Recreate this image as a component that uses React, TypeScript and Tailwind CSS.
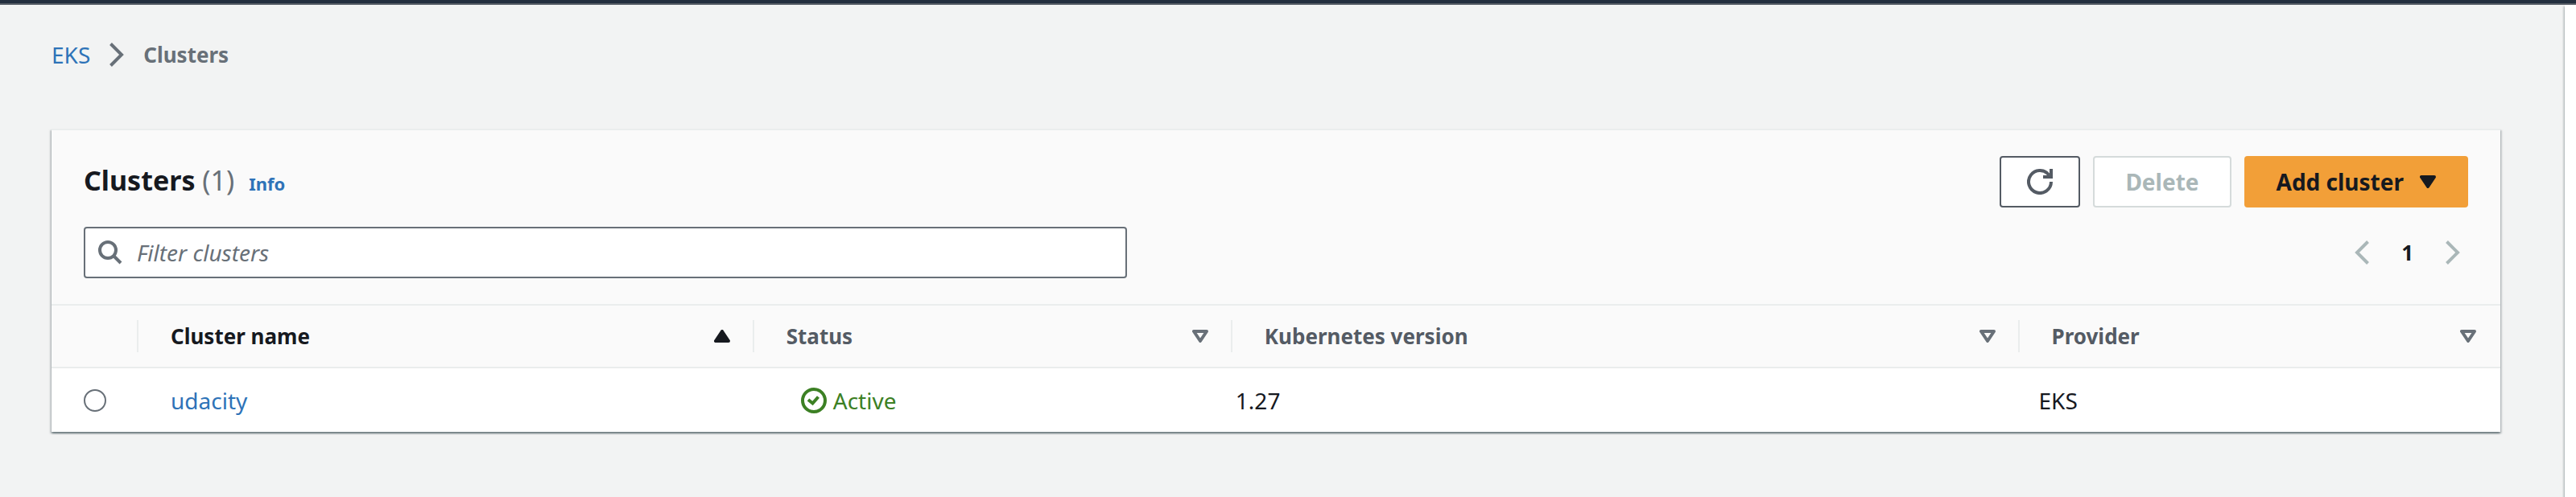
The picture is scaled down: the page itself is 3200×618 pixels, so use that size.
import React from "react";

function Caret({ kind }: { kind: "up" | "down" | "outline" }) {
  const color = kind === "outline" ? "#687078" : "#16191f";
  return (
    <svg
      width="20"
      height="16"
      viewBox="0 0 20 16"
      fill={kind === "outline" ? "none" : color}
      stroke={color}
      strokeWidth="4"
      strokeLinejoin="round"
      aria-hidden="true"
    >
      <path d={kind === "up" ? "M2 14h16L10 2z" : "M2 2h16L10 14z"} />
    </svg>
  );
}

function Chevron({ left = false, color }: { left?: boolean; color: string }) {
  return (
    <svg width="18" height="32" viewBox="0 0 18 32" fill="none" stroke={color} strokeWidth="4" aria-hidden="true">
      <path d={left ? "M16.500 2.500L3 16l13.500 13.500" : "M1.500 2.500L15 16 1.500 29.500"} />
    </svg>
  );
}

function HeaderCell({ label, sorted = false, last = false }: { label: string; sorted?: boolean; last?: boolean }) {
  return (
    <th scope="col" className="p-0 font-bold" aria-sort={sorted ? "ascending" : undefined}>
      <button
        type="button"
        className={`my-[18px] flex h-10 w-full items-center justify-between border-[#eaeded] pl-10 text-left ${
          last ? "pr-[30px]" : "border-r-2 pr-7"
        } ${sorted ? "text-[#16191f]" : "text-[#545b64]"}`}
      >
        {label}
        <Caret kind={sorted ? "up" : "outline"} />
      </button>
    </th>
  );
}

export default function App() {
  return (
    <div className="flex min-h-screen flex-col bg-white font-['Noto_Sans',sans-serif] text-[28px] leading-10 text-[#16191f]">
      <div className="h-1.5 shrink-0 border-b-2 border-[#545b64] bg-[#232f3e]" />
      <div className="flex grow">
        <main className="grow bg-[#f2f3f3] pt-[42px] pr-20 pl-16">
          <nav aria-label="Breadcrumbs" className="flex items-center gap-6 pb-[72px]">
            <a href="#eks" className="text-[#2e73b8]">EKS</a>
            <Chevron color="#687078" />
            <span className="text-[26px] font-bold text-[#687078]">Clusters</span>
          </nav>

          <section className="border-t-2 border-[#eaeded] bg-[#fafafa] shadow-[0_2px_2px_rgba(0,28,36,0.4),2px_2px_2px_rgba(0,28,36,0.15),-2px_2px_2px_rgba(0,28,36,0.15)]">
            <div className="flex items-start justify-between px-10 pt-8">
              <div className="flex items-baseline gap-[18px]">
                <h2 className="text-[34px] leading-[60px] font-bold">
                  Clusters <span className="font-normal text-[#687078]">(1)</span>
                </h2>
                <a href="#info" className="text-[22px] font-bold text-[#2e73b8]">Info</a>
              </div>
              <div className="flex gap-4 font-bold">
                <button type="button" aria-label="Refresh" className="flex h-16 w-[100px] items-center justify-center rounded-sm border-2 border-[#545b64] bg-white">
                  <svg width="32" height="32" viewBox="0 0 32 32" fill="none" stroke="#545b64" strokeWidth="4" aria-hidden="true">
                    <path d="M30 16A14 14 0 1 1 27.500 8" />
                    <path d="M30 0v10H20" />
                  </svg>
                </button>
                <button type="button" disabled className="h-16 rounded-sm border-2 border-[#d5dbdb] bg-white px-[38px] text-[#aab7b8]">Delete</button>
                <button type="button" className="flex h-16 items-center gap-5 rounded-sm bg-[#f29f38] px-10">
                  Add cluster <Caret kind="down" />
                </button>
              </div>
            </div>

            <div className="flex items-center justify-between px-10 pt-6 pb-8">
              <label className="flex h-16 w-[1296px] items-center gap-[18px] rounded-sm border-2 border-[#687078] bg-white px-4">
                <svg width="30" height="30" viewBox="0 0 30 30" fill="none" stroke="#687078" strokeWidth="4" aria-hidden="true">
                  <circle cx="12" cy="12" r="10" />
                  <path d="M19 19l9 9" />
                </svg>
                <input type="text" aria-label="Filter clusters" placeholder="Filter clusters" className="min-w-0 grow outline-none placeholder:text-[#687078] placeholder:italic" />
              </label>
              <nav aria-label="Pagination" className="flex items-center gap-10 pr-2.5 text-[26px] font-bold">
                <button type="button" disabled aria-label="Previous page"><Chevron left color="#aab7b8" /></button>
                <button type="button">1</button>
                <button type="button" disabled aria-label="Next page"><Chevron color="#aab7b8" /></button>
              </nav>
            </div>

            <table className="w-full table-fixed border-collapse text-left">
              <colgroup>
                <col className="w-[108px]" />
                <col className="w-[25.14%]" />
                <col className="w-[19.53%]" />
                <col className="w-[32.14%]" />
                <col />
              </colgroup>
              <thead className="border-y-2 border-[#eaeded] text-[26px]">
                <tr>
                  <th scope="col" aria-label="Selection" className="p-0">
                    <div className="h-10 border-r-2 border-[#eaeded]" />
                  </th>
                  <HeaderCell label="Cluster name" sorted />
                  <HeaderCell label="Status" />
                  <HeaderCell label="Kubernetes version" />
                  <HeaderCell label="Provider" last />
                </tr>
              </thead>
              <tbody className="bg-white">
                <tr className="h-20">
                  <td className="p-0 pl-10">
                    <input type="radio" name="cluster" aria-label="udacity" className="block size-7 appearance-none rounded-full border-2 border-[#687078] bg-white" />
                  </td>
                  <td className="p-0 pl-10"><a href="#udacity" className="text-[#2e73b8]">udacity</a></td>
                  <td className="p-0 pl-[58px]">
                    <span className="flex items-center gap-2 text-[#3c8024]">
                      <svg width="32" height="32" viewBox="0 0 32 32" fill="none" stroke="#3c8024" strokeWidth="4" aria-hidden="true">
                        <circle cx="16" cy="16" r="14" />
                        <path d="M9 15l5.500 4.500L21.500 11.500" />
                      </svg>
                      Active
                    </span>
                  </td>
                  <td className="p-0 pl-1">1.27</td>
                  <td className="p-0 pl-6">EKS</td>
                </tr>
              </tbody>
            </table>
          </section>
        </main>
        <aside className="w-3.5 shrink-0 bg-white shadow-[0_2px_2px_rgba(0,28,36,0.3),-2px_2px_2px_rgba(0,28,36,0.15)]" />
      </div>
    </div>
  );
}
